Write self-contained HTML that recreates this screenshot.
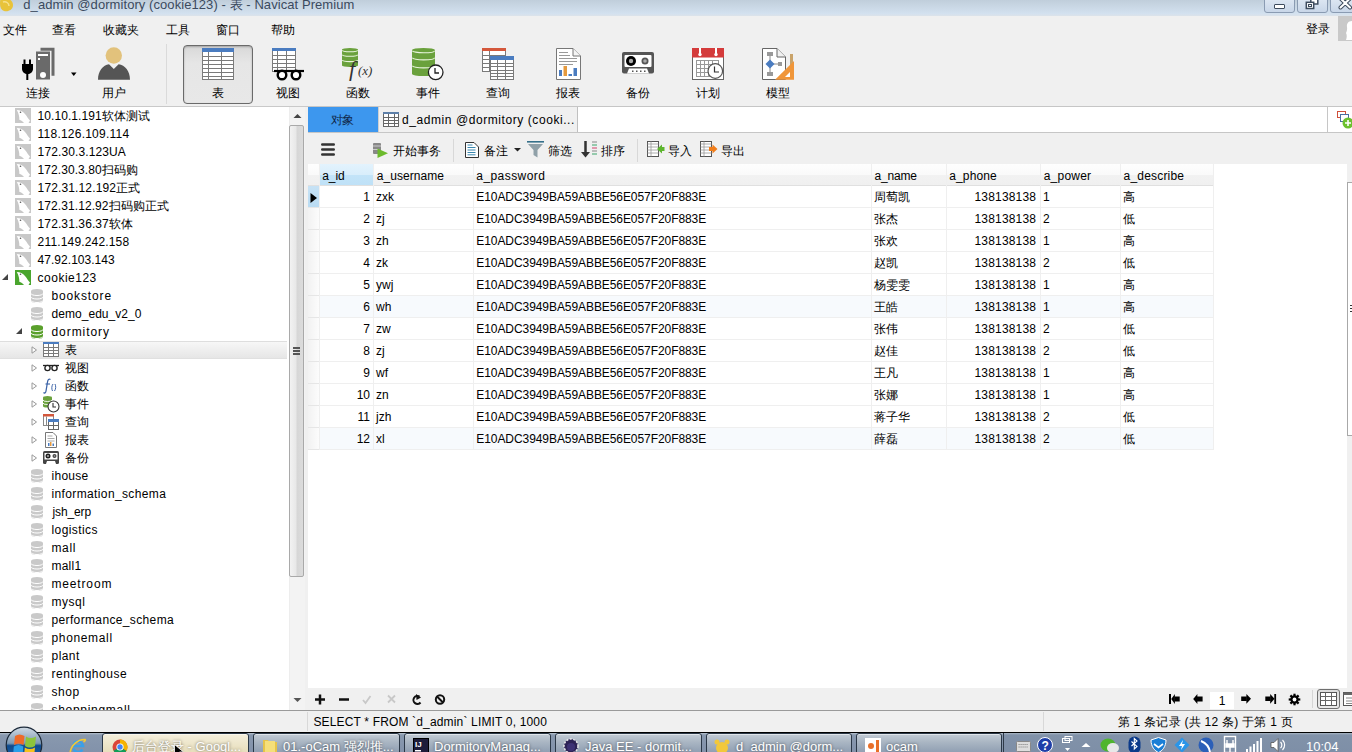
<!DOCTYPE html><html><head><meta charset="utf-8"><style>
*{box-sizing:border-box;margin:0;padding:0}
html,body{width:1352px;height:752px;overflow:hidden;background:#f0f0f0;font-family:"Liberation Sans",sans-serif;font-size:12px;color:#000}
.a{position:absolute}
.t{position:absolute;white-space:nowrap;line-height:14px}
svg{position:absolute;overflow:visible}
</style></head><body>
<div class="a" style="left:0;top:0;width:1352px;height:16px;background:linear-gradient(#c0cedb,#d3e1ef 85%,#dce3ea)"></div>
<svg style="left:0;top:0" width="16" height="16"><path d="M1,-3 C6,-4 13,0 13,5 C13,10 8,12 4,11 C0,10 -1,4 1,-3Z" fill="#e8c33a"/><path d="M3,2 C6,1 9,3 9,6" stroke="#f6e08a" stroke-width="1.5" fill="none"/></svg>
<div class="t" style="left:23.30px;top:-2px;font-size:13px;color:#3b4a5e;letter-spacing:0.070px;">d_admin @dormitory (cookie123) - 表 - Navicat Premium</div>
<div class="a" style="left:1264px;top:-3px;width:31px;height:16px;border:1px solid #8a9bb2;border-radius:3px;background:linear-gradient(#dfe8f3,#c8d6e8)"></div>
<div class="a" style="left:1274px;top:4px;width:11px;height:5px;border:1.5px solid #3e4c5e;border-radius:1px;background:#fff"></div>
<div class="a" style="left:1297px;top:-3px;width:31px;height:16px;border:1px solid #8a9bb2;border-radius:3px;background:linear-gradient(#dfe8f3,#c8d6e8)"></div>
<svg style="left:1305px;top:-2px" width="16" height="14"><rect x="5.8" y="-1" width="7" height="7" fill="#fff" stroke="#3e4c5e" stroke-width="1.5"/><rect x="1.3" y="4.3" width="7.4" height="6.2" fill="#fff" stroke="#3e4c5e" stroke-width="1.5"/><rect x="3.5" y="6.5" width="3" height="2" fill="none" stroke="#3e4c5e" stroke-width="1"/></svg>
<div class="a" style="left:1330px;top:-3px;width:30px;height:16px;border:1px solid #8a9bb2;border-radius:3px;background:linear-gradient(#dfe8f3,#c8d6e8)"></div>
<svg style="left:1339px;top:-2px" width="14" height="12"><path d="M1.5,0.5 L11,9.5 M11,0.5 L1.5,9.5" stroke="#3e4c5e" stroke-width="4" stroke-linecap="round"/><path d="M1.5,0.5 L11,9.5 M11,0.5 L1.5,9.5" stroke="#fff" stroke-width="2" stroke-linecap="round"/></svg>
<div class="t" style="left:3.00px;top:23px;font-size:12px;color:#000;">文件</div>
<div class="t" style="left:52.00px;top:23px;font-size:12px;color:#000;">查看</div>
<div class="t" style="left:103.00px;top:23px;font-size:12px;color:#000;">收藏夹</div>
<div class="t" style="left:166.00px;top:23px;font-size:12px;color:#000;">工具</div>
<div class="t" style="left:216.00px;top:23px;font-size:12px;color:#000;">窗口</div>
<div class="t" style="left:271.00px;top:23px;font-size:12px;color:#000;">帮助</div>
<div class="t" style="left:1306.00px;top:22px;font-size:12px;color:#000;">登录</div>
<div class="a" style="left:1338px;top:16px;width:14px;height:25px;background:#c9c9c9"></div>
<svg style="left:1338px;top:16px" width="14" height="25"><path d="M14,5 C10,5 8.5,8 9,11 C9.3,13 9,15 8,17 C9,19 9,21 8,24 L14,24Z" fill="#fff"/></svg>
<div class="a" style="left:166px;top:44px;width:1px;height:60px;background:#dadada"></div>
<div class="a" style="left:183px;top:45px;width:70px;height:59px;border:1px solid #6a6a6a;border-radius:4px;background:linear-gradient(#d8d8d8,#e6e6e6 30%,#e8e8e8);box-shadow:inset 0 1px 2px rgba(0,0,0,.25)"></div>
<div class="t" style="left:8px;top:86px;width:60px;text-align:center;font-size:12px">连接</div>
<div class="t" style="left:83.6px;top:86px;width:60px;text-align:center;font-size:12px">用户</div>
<div class="t" style="left:188px;top:86px;width:60px;text-align:center;font-size:12px">表</div>
<div class="t" style="left:257.6px;top:86px;width:60px;text-align:center;font-size:12px">视图</div>
<div class="t" style="left:327.8px;top:86px;width:60px;text-align:center;font-size:12px">函数</div>
<div class="t" style="left:397.7px;top:86px;width:60px;text-align:center;font-size:12px">事件</div>
<div class="t" style="left:468px;top:86px;width:60px;text-align:center;font-size:12px">查询</div>
<div class="t" style="left:538px;top:86px;width:60px;text-align:center;font-size:12px">报表</div>
<div class="t" style="left:608px;top:86px;width:60px;text-align:center;font-size:12px">备份</div>
<div class="t" style="left:678px;top:86px;width:60px;text-align:center;font-size:12px">计划</div>
<div class="t" style="left:748px;top:86px;width:60px;text-align:center;font-size:12px">模型</div>
<svg style="left:21px;top:47px" width="60" height="34">
<path d="M19.5,2.3 h12.5 v26.5" fill="none" stroke="#6a6a6a" stroke-width="3"/>
<rect x="15" y="4.5" width="14" height="28" fill="#6a6a6a"/>
<rect x="17" y="7" width="10" height="2" fill="#fff"/>
<rect x="17" y="11" width="2" height="2" fill="#fff"/>
<circle cx="22" cy="28" r="3" fill="#fff"/>
<rect x="2.5" y="12.5" width="2" height="5" fill="#000"/><rect x="8" y="12.5" width="2" height="5" fill="#000"/>
<path d="M1,17 h11 v5 c0,3 -3,5 -5,5 h-1 c-2,0 -5,-2 -5,-5z" fill="#000"/>
<rect x="5.3" y="26" width="2" height="7" fill="#000"/>
<path d="M50,25.5 h5.5 l-2.75,3.5z" fill="#000"/>
</svg>
<svg style="left:97px;top:47px" width="34" height="34">
<circle cx="16.8" cy="8.5" r="8.2" fill="#e2c27c"/>
<path d="M1,32.7 C1,24 6,18 12,17.3 L16.8,22 L21.6,17.3 C28,18 33,24 33,32.7Z" fill="#555"/>
</svg>
<svg style="left:202px;top:48px" width="32" height="32"><rect x="0.5" y="0.5" width="31" height="31" fill="#fff" stroke="#7a7a7a"/><rect x="0" y="0" width="32" height="4" fill="#4a7cc0"/><line x1="0" x2="32" y1="8.5" y2="8.5" stroke="#7a7a7a" stroke-width="1"/><line x1="0" x2="32" y1="12.5" y2="12.5" stroke="#7a7a7a" stroke-width="1"/><line x1="0" x2="32" y1="16.5" y2="16.5" stroke="#7a7a7a" stroke-width="1"/><line x1="0" x2="32" y1="20.5" y2="20.5" stroke="#7a7a7a" stroke-width="1"/><line x1="0" x2="32" y1="24.5" y2="24.5" stroke="#7a7a7a" stroke-width="1"/><line x1="0" x2="32" y1="28.5" y2="28.5" stroke="#7a7a7a" stroke-width="1"/><line x1="6.5" x2="6.5" y1="4" y2="32" stroke="#7a7a7a" stroke-width="1"/><line x1="19.5" x2="19.5" y1="4" y2="32" stroke="#7a7a7a" stroke-width="1"/></svg>
<svg style="left:272px;top:48px" width="24" height="24"><rect x="0.5" y="0.5" width="23" height="23" fill="#fff" stroke="#7a7a7a"/><rect x="0" y="0" width="24" height="3" fill="#4a7cc0"/><line x1="0" x2="24" y1="7.5" y2="7.5" stroke="#7a7a7a" stroke-width="1"/><line x1="0" x2="24" y1="11.5" y2="11.5" stroke="#7a7a7a" stroke-width="1"/><line x1="0" x2="24" y1="15.5" y2="15.5" stroke="#7a7a7a" stroke-width="1"/><line x1="0" x2="24" y1="19.5" y2="19.5" stroke="#7a7a7a" stroke-width="1"/><line x1="5.5" x2="5.5" y1="3" y2="24" stroke="#7a7a7a" stroke-width="1"/><line x1="14.5" x2="14.5" y1="3" y2="24" stroke="#7a7a7a" stroke-width="1"/></svg>
<svg style="left:274px;top:69px" width="32" height="12">
<path d="M0,2 h30" stroke="#000" stroke-width="2.2"/>
<circle cx="8" cy="6" r="4.3" fill="#fff" stroke="#000" stroke-width="2.4"/>
<circle cx="22" cy="6" r="4.3" fill="#fff" stroke="#000" stroke-width="2.4"/>
</svg>
<svg style="left:342px;top:48px" width="16" height="19"><path d="M0,1.6 A8.0,1.6 0 0 1 16,1.6 V17.4 A8.0,1.6 0 0 1 0,17.4Z" fill="#6aa13c"/><path d="M0.5,2.2 A7.5,1.6 0 0 0 15.5,2.2" fill="none" stroke="#e8f5dc" stroke-width="1.1"/><path d="M0.5,6.7 A7.5,1.6 0 0 0 15.5,6.7" fill="none" stroke="#e8f5dc" stroke-width="1.1"/><path d="M0.5,12.0 A7.5,1.6 0 0 0 15.5,12.0" fill="none" stroke="#e8f5dc" stroke-width="1.1"/></svg>
<div class="t" style="left:349px;top:58px;font-family:'Liberation Serif',serif;font-style:italic;font-size:22px;line-height:22px;color:#333">f</div>
<div class="t" style="left:358px;top:64px;font-family:'Liberation Serif',serif;font-style:italic;font-size:13px;line-height:14px;color:#333">(x)</div>
<svg style="left:412px;top:48px" width="23" height="28"><path d="M0,2.07 A11.5,2.07 0 0 1 23,2.07 V25.93 A11.5,2.07 0 0 1 0,25.93Z" fill="#6aa13c"/><path d="M0.5,2.7 A11.0,2.07 0 0 0 22.5,2.7" fill="none" stroke="#e8f5dc" stroke-width="1.1"/><path d="M0.5,9.8 A11.0,2.07 0 0 0 22.5,9.8" fill="none" stroke="#e8f5dc" stroke-width="1.1"/><path d="M0.5,17.8 A11.0,2.07 0 0 0 22.5,17.8" fill="none" stroke="#e8f5dc" stroke-width="1.1"/></svg>
<svg style="left:427px;top:64px" width="18" height="18"><circle cx="8.7" cy="8.3" r="7.3" fill="#fff" stroke="#222" stroke-width="1.3"/><path d="M8,4 V9 H12" fill="none" stroke="#222" stroke-width="1.3"/></svg>
<svg style="left:482px;top:48px" width="24" height="24"><rect x="0.5" y="0.5" width="23" height="23" fill="#fff" stroke="#7a7a7a"/><rect x="0" y="0" width="24" height="3" fill="#d4573b"/><line x1="0" x2="24" y1="7.5" y2="7.5" stroke="#7a7a7a" stroke-width="1"/><line x1="0" x2="24" y1="11.5" y2="11.5" stroke="#7a7a7a" stroke-width="1"/><line x1="0" x2="24" y1="15.5" y2="15.5" stroke="#7a7a7a" stroke-width="1"/><line x1="0" x2="24" y1="19.5" y2="19.5" stroke="#7a7a7a" stroke-width="1"/><line x1="7.5" x2="7.5" y1="3" y2="24" stroke="#7a7a7a" stroke-width="1"/></svg>
<svg style="left:490px;top:56px" width="24" height="24"><rect x="0.5" y="0.5" width="23" height="23" fill="#fff" stroke="#7a7a7a"/><rect x="0" y="0" width="24" height="4" fill="#4a7cc0"/><line x1="0" x2="24" y1="7.5" y2="7.5" stroke="#7a7a7a" stroke-width="1"/><line x1="0" x2="24" y1="10.5" y2="10.5" stroke="#7a7a7a" stroke-width="1"/><line x1="0" x2="24" y1="14.5" y2="14.5" stroke="#7a7a7a" stroke-width="1"/><line x1="0" x2="24" y1="17.5" y2="17.5" stroke="#7a7a7a" stroke-width="1"/><line x1="0" x2="24" y1="20.5" y2="20.5" stroke="#7a7a7a" stroke-width="1"/><line x1="7.5" x2="7.5" y1="4" y2="24" stroke="#7a7a7a" stroke-width="1"/><line x1="15.5" x2="15.5" y1="4" y2="24" stroke="#7a7a7a" stroke-width="1"/></svg>
<svg style="left:556px;top:48px" width="25" height="32">
<path d="M0.5,0.5 H17 L24.5,8 V31.5 H0.5Z" fill="#fff" stroke="#777"/>
<path d="M17,0.5 V8 H24.5" fill="#f4f4f4" stroke="#777"/>
<g stroke="#999" stroke-width="1"><path d="M3,4.5h9M3,7.5h11M3,10.5h18M3,13.5h18M3,16.5h14"/></g>
<rect x="3" y="22" width="3" height="6" fill="#4a7cc0"/><rect x="7.5" y="18" width="3.5" height="10" fill="#e59a3e"/>
<rect x="12.5" y="26" width="3.5" height="2" fill="#4a7cc0"/><rect x="17.5" y="20" width="3.5" height="8" fill="#4a7cc0"/>
</svg>
<svg style="left:622px;top:52px" width="33" height="23">
<rect x="0" y="0" width="32" height="21.5" rx="2" fill="#555"/>
<rect x="2.5" y="3" width="27" height="12" rx="1" fill="#fff"/>
<circle cx="9" cy="9" r="5" fill="#000"/><circle cx="9" cy="9" r="2.2" fill="#aaa"/>
<circle cx="23" cy="9" r="3.5" fill="#555"/><circle cx="23" cy="9" r="1.8" fill="#aaa"/>
<path d="M5,21.5 L7,16.5 H25 L27,21.5Z" fill="#fff"/>
<g fill="#555"><rect x="10" y="18.5" width="1.5" height="1.5"/><rect x="14" y="18.5" width="1.5" height="1.5"/><rect x="18" y="18.5" width="1.5" height="1.5"/><rect x="22" y="18.5" width="1.5" height="1.5"/></g>
</svg>
<svg style="left:692px;top:48px" width="33" height="33">
<rect x="0.5" y="0.5" width="31" height="31" fill="#fff" stroke="#666"/>
<rect x="0" y="0" width="32" height="9.5" fill="#d43b3b"/>
<rect x="7" y="0" width="2" height="6" fill="#fff"/><circle cx="8" cy="6.5" r="1.7" fill="#fff"/>
<rect x="23" y="0" width="2" height="6" fill="#fff"/><circle cx="24" cy="6.5" r="1.7" fill="#fff"/>
<g fill="none" stroke="#999" stroke-width="1"><rect x="4.5" y="12.5" width="22" height="16"/><path d="M4.5,16.5h22M4.5,20.5h22M4.5,24.5h22M8.5,12.5v16M12.5,12.5v16M16.5,12.5v16M20.5,12.5v16"/></g>
<circle cx="23.3" cy="23" r="7.3" fill="#fff" stroke="#555" stroke-width="1.2"/>
<path d="M22.5,18.5 V24 H27" fill="none" stroke="#333" stroke-width="1.2"/>
</svg>
<svg style="left:762px;top:48px" width="34" height="33">
<path d="M0.5,0.5 H15 L23.5,9 V31.5 H0.5Z" fill="#fff" stroke="#666"/>
<path d="M15,0.5 V9 H23.5" fill="#f0f0f0" stroke="#666"/>
<rect x="5" y="4" width="6" height="4" fill="#999"/><rect x="5" y="24" width="6" height="4" fill="#999"/><rect x="16" y="14" width="4" height="4" fill="#999"/>
<path d="M8,8 V24 M8,16 H16" stroke="#888" stroke-width="1"/>
<path d="M8,11.5 L12.5,16 L8,20.5 L3.5,16Z" fill="#4a7cc0"/>
<rect x="28" y="6" width="3" height="14" fill="#c9a36a"/>
<path d="M32,13 V31.8 H13Z" fill="#f0963a"/><path d="M28,24 V29 H23Z" fill="#fff"/>
</svg>
<div class="a" style="left:0;top:106px;width:1352px;height:1px;background:#c9c9c9"></div>
<div class="a" style="left:0;top:107px;width:289px;height:603px;background:#fff;overflow:hidden">
<svg style="left:15px;top:1.0px" width="16" height="16"><rect x="0" y="0" width="16" height="15" fill="#c8c8c8"/><path d="M1.8,2 C5,2 8,3.5 10,6 C12,8.5 13.5,11 15,12.5 L13.5,15 L9,15 C8,13.5 6,12.5 4.3,11.8 C4.5,9 3.8,5.5 1.8,2Z" fill="#fff"/><circle cx="5.5" cy="4.3" r="0.8" fill="#555"/></svg>
<div class="t" style="left:37.60px;top:1.5px;font-size:12px;color:#000;letter-spacing:0.058px;">10.10.1.191软体测试</div>
<svg style="left:15px;top:19.0px" width="16" height="16"><rect x="0" y="0" width="16" height="15" fill="#c8c8c8"/><path d="M1.8,2 C5,2 8,3.5 10,6 C12,8.5 13.5,11 15,12.5 L13.5,15 L9,15 C8,13.5 6,12.5 4.3,11.8 C4.5,9 3.8,5.5 1.8,2Z" fill="#fff"/><circle cx="5.5" cy="4.3" r="0.8" fill="#555"/></svg>
<div class="t" style="left:37.60px;top:19.5px;font-size:12px;color:#000;letter-spacing:0.226px;">118.126.109.114</div>
<svg style="left:15px;top:37.0px" width="16" height="16"><rect x="0" y="0" width="16" height="15" fill="#c8c8c8"/><path d="M1.8,2 C5,2 8,3.5 10,6 C12,8.5 13.5,11 15,12.5 L13.5,15 L9,15 C8,13.5 6,12.5 4.3,11.8 C4.5,9 3.8,5.5 1.8,2Z" fill="#fff"/><circle cx="5.5" cy="4.3" r="0.8" fill="#555"/></svg>
<div class="t" style="left:37.60px;top:37.5px;font-size:12px;color:#000;letter-spacing:0.113px;">172.30.3.123UA</div>
<svg style="left:15px;top:55.0px" width="16" height="16"><rect x="0" y="0" width="16" height="15" fill="#c8c8c8"/><path d="M1.8,2 C5,2 8,3.5 10,6 C12,8.5 13.5,11 15,12.5 L13.5,15 L9,15 C8,13.5 6,12.5 4.3,11.8 C4.5,9 3.8,5.5 1.8,2Z" fill="#fff"/><circle cx="5.5" cy="4.3" r="0.8" fill="#555"/></svg>
<div class="t" style="left:37.60px;top:55.5px;font-size:12px;color:#000;letter-spacing:0.062px;">172.30.3.80扫码购</div>
<svg style="left:15px;top:73.0px" width="16" height="16"><rect x="0" y="0" width="16" height="15" fill="#c8c8c8"/><path d="M1.8,2 C5,2 8,3.5 10,6 C12,8.5 13.5,11 15,12.5 L13.5,15 L9,15 C8,13.5 6,12.5 4.3,11.8 C4.5,9 3.8,5.5 1.8,2Z" fill="#fff"/><circle cx="5.5" cy="4.3" r="0.8" fill="#555"/></svg>
<div class="t" style="left:37.60px;top:73.5px;font-size:12px;color:#000;letter-spacing:0.133px;">172.31.12.192正式</div>
<svg style="left:15px;top:91.0px" width="16" height="16"><rect x="0" y="0" width="16" height="15" fill="#c8c8c8"/><path d="M1.8,2 C5,2 8,3.5 10,6 C12,8.5 13.5,11 15,12.5 L13.5,15 L9,15 C8,13.5 6,12.5 4.3,11.8 C4.5,9 3.8,5.5 1.8,2Z" fill="#fff"/><circle cx="5.5" cy="4.3" r="0.8" fill="#555"/></svg>
<div class="t" style="left:37.60px;top:91.5px;font-size:12px;color:#000;letter-spacing:0.077px;">172.31.12.92扫码购正式</div>
<svg style="left:15px;top:109.0px" width="16" height="16"><rect x="0" y="0" width="16" height="15" fill="#c8c8c8"/><path d="M1.8,2 C5,2 8,3.5 10,6 C12,8.5 13.5,11 15,12.5 L13.5,15 L9,15 C8,13.5 6,12.5 4.3,11.8 C4.5,9 3.8,5.5 1.8,2Z" fill="#fff"/><circle cx="5.5" cy="4.3" r="0.8" fill="#555"/></svg>
<div class="t" style="left:37.60px;top:109.5px;font-size:12px;color:#000;letter-spacing:0.103px;">172.31.36.37软体</div>
<svg style="left:15px;top:127.0px" width="16" height="16"><rect x="0" y="0" width="16" height="15" fill="#c8c8c8"/><path d="M1.8,2 C5,2 8,3.5 10,6 C12,8.5 13.5,11 15,12.5 L13.5,15 L9,15 C8,13.5 6,12.5 4.3,11.8 C4.5,9 3.8,5.5 1.8,2Z" fill="#fff"/><circle cx="5.5" cy="4.3" r="0.8" fill="#555"/></svg>
<div class="t" style="left:37.60px;top:127.5px;font-size:12px;color:#000;letter-spacing:0.163px;">211.149.242.158</div>
<svg style="left:15px;top:145.0px" width="16" height="16"><rect x="0" y="0" width="16" height="15" fill="#c8c8c8"/><path d="M1.8,2 C5,2 8,3.5 10,6 C12,8.5 13.5,11 15,12.5 L13.5,15 L9,15 C8,13.5 6,12.5 4.3,11.8 C4.5,9 3.8,5.5 1.8,2Z" fill="#fff"/><circle cx="5.5" cy="4.3" r="0.8" fill="#555"/></svg>
<div class="t" style="left:37.60px;top:145.5px;font-size:12px;color:#000;letter-spacing:0.028px;">47.92.103.143</div>
<svg style="left:2px;top:167.0px" width="7" height="6"><path d="M6,0 V6 H0Z" fill="#444"/></svg>
<svg style="left:15px;top:163.0px" width="16" height="16"><rect x="0" y="0" width="16" height="15" fill="#4aa52e"/><path d="M1.8,2 C5,2 8,3.5 10,6 C12,8.5 13.5,11 15,12.5 L13.5,15 L9,15 C8,13.5 6,12.5 4.3,11.8 C4.5,9 3.8,5.5 1.8,2Z" fill="#fff"/><circle cx="5.5" cy="4.3" r="0.8" fill="#555"/></svg>
<div class="t" style="left:37.60px;top:163.5px;font-size:12px;color:#000;letter-spacing:0.496px;">cookie123</div>
<svg style="left:31px;top:181.5px" width="12" height="14"><path d="M0,2 A6,2 0 0 1 12,2 V12 A6,2 0 0 1 0,12Z" fill="#c9c9c9"/><path d="M0,4.5 A6,2 0 0 0 12,4.5" fill="none" stroke="#fff" stroke-width="1"/><path d="M0,8 A6,2 0 0 0 12,8" fill="none" stroke="#fff" stroke-width="1"/><path d="M0,11.5 A6,2 0 0 0 12,11.5" fill="none" stroke="#fff" stroke-width="1"/></svg>
<div class="t" style="left:51.50px;top:181.5px;font-size:12px;color:#000;letter-spacing:0.859px;">bookstore</div>
<svg style="left:31px;top:199.5px" width="12" height="14"><path d="M0,2 A6,2 0 0 1 12,2 V12 A6,2 0 0 1 0,12Z" fill="#c9c9c9"/><path d="M0,4.5 A6,2 0 0 0 12,4.5" fill="none" stroke="#fff" stroke-width="1"/><path d="M0,8 A6,2 0 0 0 12,8" fill="none" stroke="#fff" stroke-width="1"/><path d="M0,11.5 A6,2 0 0 0 12,11.5" fill="none" stroke="#fff" stroke-width="1"/></svg>
<div class="t" style="left:51.50px;top:199.5px;font-size:12px;color:#000;letter-spacing:0.047px;">demo_edu_v2_0</div>
<svg style="left:16px;top:221.0px" width="7" height="6"><path d="M6,0 V6 H0Z" fill="#444"/></svg>
<svg style="left:31px;top:217.5px" width="12" height="14"><path d="M0,2 A6,2 0 0 1 12,2 V12 A6,2 0 0 1 0,12Z" fill="#5aa02c"/><path d="M0,4.5 A6,2 0 0 0 12,4.5" fill="none" stroke="#fff" stroke-width="1"/><path d="M0,8 A6,2 0 0 0 12,8" fill="none" stroke="#fff" stroke-width="1"/><path d="M0,11.5 A6,2 0 0 0 12,11.5" fill="none" stroke="#fff" stroke-width="1"/></svg>
<div class="t" style="left:51.50px;top:217.5px;font-size:12px;color:#000;letter-spacing:0.936px;">dormitory</div>
<div class="a" style="left:0;top:234.0px;width:287px;height:18px;background:linear-gradient(#f7f7f7,#e6e6e6);border-top:1px solid #dedede;border-bottom:1px solid #e0e0e0"></div>
<svg style="left:31px;top:238.5px" width="7" height="9"><path d="M1,0.8 L5.5,4 L1,7.2Z" fill="#fff" stroke="#999" stroke-width="1"/></svg>
<div class="t" style="left:65.00px;top:235.5px;font-size:12px;color:#000;">表</div>
<svg style="left:31px;top:256.5px" width="7" height="9"><path d="M1,0.8 L5.5,4 L1,7.2Z" fill="#fff" stroke="#999" stroke-width="1"/></svg>
<div class="t" style="left:65.00px;top:253.5px;font-size:12px;color:#000;">视图</div>
<svg style="left:31px;top:274.5px" width="7" height="9"><path d="M1,0.8 L5.5,4 L1,7.2Z" fill="#fff" stroke="#999" stroke-width="1"/></svg>
<div class="t" style="left:65.00px;top:271.5px;font-size:12px;color:#000;">函数</div>
<svg style="left:31px;top:292.5px" width="7" height="9"><path d="M1,0.8 L5.5,4 L1,7.2Z" fill="#fff" stroke="#999" stroke-width="1"/></svg>
<div class="t" style="left:65.00px;top:289.5px;font-size:12px;color:#000;">事件</div>
<svg style="left:31px;top:310.5px" width="7" height="9"><path d="M1,0.8 L5.5,4 L1,7.2Z" fill="#fff" stroke="#999" stroke-width="1"/></svg>
<div class="t" style="left:65.00px;top:307.5px;font-size:12px;color:#000;">查询</div>
<svg style="left:31px;top:328.5px" width="7" height="9"><path d="M1,0.8 L5.5,4 L1,7.2Z" fill="#fff" stroke="#999" stroke-width="1"/></svg>
<div class="t" style="left:65.00px;top:325.5px;font-size:12px;color:#000;">报表</div>
<svg style="left:31px;top:346.5px" width="7" height="9"><path d="M1,0.8 L5.5,4 L1,7.2Z" fill="#fff" stroke="#999" stroke-width="1"/></svg>
<div class="t" style="left:65.00px;top:343.5px;font-size:12px;color:#000;">备份</div>
<svg style="left:43px;top:235px" width="16" height="15"><rect x="0.5" y="0.5" width="15" height="14" fill="#fff" stroke="#7a7a7a"/><rect x="0" y="0" width="16" height="2" fill="#4a7cc0"/><line x1="0" x2="16" y1="5.5" y2="5.5" stroke="#7a7a7a" stroke-width="1"/><line x1="0" x2="16" y1="8.5" y2="8.5" stroke="#7a7a7a" stroke-width="1"/><line x1="0" x2="16" y1="11.5" y2="11.5" stroke="#7a7a7a" stroke-width="1"/><line x1="5.5" x2="5.5" y1="2" y2="15" stroke="#7a7a7a" stroke-width="1"/><line x1="10.5" x2="10.5" y1="2" y2="15" stroke="#7a7a7a" stroke-width="1"/></svg>
<svg style="left:43px;top:256.5px" width="16" height="8"><path d="M0,1.5 h16" stroke="#222" stroke-width="1.3"/><circle cx="4.5" cy="4" r="2.6" fill="#fff" stroke="#222" stroke-width="1.4"/><circle cx="11.5" cy="4" r="2.6" fill="#fff" stroke="#222" stroke-width="1.4"/></svg>
<svg style="left:43px;top:270.5px" width="16" height="16"><path d="M7.5,1.5 C6,0.5 4.8,1.5 4.5,4 L3,13 C2.7,15 1.5,15.5 0.5,14.5" fill="none" stroke="#3d64a8" stroke-width="1.3"/><path d="M2.5,6 H7" stroke="#3d64a8" stroke-width="1.1"/><path d="M10,6 C8.5,8 8.5,11 9.5,13" fill="none" stroke="#3d64a8" stroke-width="1"/><path d="M12,6 C13,8 13,11 11.5,13" fill="none" stroke="#3d64a8" stroke-width="1"/></svg>
<svg style="left:43px;top:288.5px" width="17" height="17"><path d="M0,1.5 A4.5,1.5 0 0 1 9,1.5 V10 A4.5,1.5 0 0 1 0,10Z" fill="#6aa13c"/><path d="M0,4 A4.5,1.5 0 0 0 9,4 M0,7 A4.5,1.5 0 0 0 9,7" fill="none" stroke="#fff" stroke-width="0.9"/><circle cx="10.5" cy="10.5" r="5.5" fill="#fff" stroke="#333" stroke-width="1.1"/><path d="M10,7 V11 H13" fill="none" stroke="#333" stroke-width="1.1"/></svg>
<svg style="left:43px;top:306.5px" width="17" height="17"><rect x="0.5" y="0.5" width="10" height="11" fill="#fff" stroke="#888"/><rect x="0" y="0" width="11" height="2.5" fill="#d4573b"/><path d="M3.5,2.5V11" stroke="#888"/><rect x="5.5" y="5.5" width="10" height="10" fill="#fff" stroke="#666"/><rect x="5" y="5" width="11" height="3" fill="#4a7cc0"/><path d="M5.5,11.5h10M10.5,8v7.5" stroke="#666"/></svg>
<svg style="left:45px;top:324.5px" width="12" height="16"><path d="M0.5,0.5 H8 L11.5,4 V15.5 H0.5Z" fill="#fff" stroke="#777"/><path d="M2.5,4h5M2.5,6.5h7M2.5,9h7" stroke="#aaa"/><rect x="3" y="11" width="1.5" height="3" fill="#4a7cc0"/><rect x="5" y="10" width="1.5" height="4" fill="#e59a3e"/><rect x="7.5" y="11.5" width="1.5" height="2.5" fill="#4a7cc0"/></svg>
<svg style="left:43px;top:343.5px" width="17" height="14"><rect x="0" y="0" width="16" height="13" rx="1.5" fill="#444"/><rect x="1.5" y="2" width="13" height="6.5" fill="#fff"/><circle cx="5" cy="5" r="2.5" fill="#222"/><circle cx="5" cy="5" r="1" fill="#aaa"/><circle cx="11.5" cy="5" r="2" fill="#444"/><circle cx="11.5" cy="5" r="0.8" fill="#aaa"/><path d="M3,13 L4,10 H12 L13,13Z" fill="#fff"/></svg>
<svg style="left:31px;top:361.5px" width="12" height="14"><path d="M0,2 A6,2 0 0 1 12,2 V12 A6,2 0 0 1 0,12Z" fill="#c9c9c9"/><path d="M0,4.5 A6,2 0 0 0 12,4.5" fill="none" stroke="#fff" stroke-width="1"/><path d="M0,8 A6,2 0 0 0 12,8" fill="none" stroke="#fff" stroke-width="1"/><path d="M0,11.5 A6,2 0 0 0 12,11.5" fill="none" stroke="#fff" stroke-width="1"/></svg>
<div class="t" style="left:51.50px;top:361.5px;font-size:12px;color:#000;letter-spacing:0.282px;">ihouse</div>
<svg style="left:31px;top:379.5px" width="12" height="14"><path d="M0,2 A6,2 0 0 1 12,2 V12 A6,2 0 0 1 0,12Z" fill="#c9c9c9"/><path d="M0,4.5 A6,2 0 0 0 12,4.5" fill="none" stroke="#fff" stroke-width="1"/><path d="M0,8 A6,2 0 0 0 12,8" fill="none" stroke="#fff" stroke-width="1"/><path d="M0,11.5 A6,2 0 0 0 12,11.5" fill="none" stroke="#fff" stroke-width="1"/></svg>
<div class="t" style="left:51.50px;top:379.5px;font-size:12px;color:#000;letter-spacing:0.372px;">information_schema</div>
<svg style="left:31px;top:397.5px" width="12" height="14"><path d="M0,2 A6,2 0 0 1 12,2 V12 A6,2 0 0 1 0,12Z" fill="#c9c9c9"/><path d="M0,4.5 A6,2 0 0 0 12,4.5" fill="none" stroke="#fff" stroke-width="1"/><path d="M0,8 A6,2 0 0 0 12,8" fill="none" stroke="#fff" stroke-width="1"/><path d="M0,11.5 A6,2 0 0 0 12,11.5" fill="none" stroke="#fff" stroke-width="1"/></svg>
<div class="t" style="left:52.50px;top:397.5px;font-size:12px;color:#000;letter-spacing:-0.114px;">jsh_erp</div>
<svg style="left:31px;top:415.5px" width="12" height="14"><path d="M0,2 A6,2 0 0 1 12,2 V12 A6,2 0 0 1 0,12Z" fill="#c9c9c9"/><path d="M0,4.5 A6,2 0 0 0 12,4.5" fill="none" stroke="#fff" stroke-width="1"/><path d="M0,8 A6,2 0 0 0 12,8" fill="none" stroke="#fff" stroke-width="1"/><path d="M0,11.5 A6,2 0 0 0 12,11.5" fill="none" stroke="#fff" stroke-width="1"/></svg>
<div class="t" style="left:51.50px;top:415.5px;font-size:12px;color:#000;letter-spacing:0.415px;">logistics</div>
<svg style="left:31px;top:433.5px" width="12" height="14"><path d="M0,2 A6,2 0 0 1 12,2 V12 A6,2 0 0 1 0,12Z" fill="#c9c9c9"/><path d="M0,4.5 A6,2 0 0 0 12,4.5" fill="none" stroke="#fff" stroke-width="1"/><path d="M0,8 A6,2 0 0 0 12,8" fill="none" stroke="#fff" stroke-width="1"/><path d="M0,11.5 A6,2 0 0 0 12,11.5" fill="none" stroke="#fff" stroke-width="1"/></svg>
<div class="t" style="left:51.50px;top:433.5px;font-size:12px;color:#000;letter-spacing:0.621px;">mall</div>
<svg style="left:31px;top:451.5px" width="12" height="14"><path d="M0,2 A6,2 0 0 1 12,2 V12 A6,2 0 0 1 0,12Z" fill="#c9c9c9"/><path d="M0,4.5 A6,2 0 0 0 12,4.5" fill="none" stroke="#fff" stroke-width="1"/><path d="M0,8 A6,2 0 0 0 12,8" fill="none" stroke="#fff" stroke-width="1"/><path d="M0,11.5 A6,2 0 0 0 12,11.5" fill="none" stroke="#fff" stroke-width="1"/></svg>
<div class="t" style="left:51.50px;top:451.5px;font-size:12px;color:#000;letter-spacing:0.225px;">mall1</div>
<svg style="left:31px;top:469.5px" width="12" height="14"><path d="M0,2 A6,2 0 0 1 12,2 V12 A6,2 0 0 1 0,12Z" fill="#c9c9c9"/><path d="M0,4.5 A6,2 0 0 0 12,4.5" fill="none" stroke="#fff" stroke-width="1"/><path d="M0,8 A6,2 0 0 0 12,8" fill="none" stroke="#fff" stroke-width="1"/><path d="M0,11.5 A6,2 0 0 0 12,11.5" fill="none" stroke="#fff" stroke-width="1"/></svg>
<div class="t" style="left:51.50px;top:469.5px;font-size:12px;color:#000;letter-spacing:0.840px;">meetroom</div>
<svg style="left:31px;top:487.5px" width="12" height="14"><path d="M0,2 A6,2 0 0 1 12,2 V12 A6,2 0 0 1 0,12Z" fill="#c9c9c9"/><path d="M0,4.5 A6,2 0 0 0 12,4.5" fill="none" stroke="#fff" stroke-width="1"/><path d="M0,8 A6,2 0 0 0 12,8" fill="none" stroke="#fff" stroke-width="1"/><path d="M0,11.5 A6,2 0 0 0 12,11.5" fill="none" stroke="#fff" stroke-width="1"/></svg>
<div class="t" style="left:51.50px;top:487.5px;font-size:12px;color:#000;letter-spacing:0.533px;">mysql</div>
<svg style="left:31px;top:505.5px" width="12" height="14"><path d="M0,2 A6,2 0 0 1 12,2 V12 A6,2 0 0 1 0,12Z" fill="#c9c9c9"/><path d="M0,4.5 A6,2 0 0 0 12,4.5" fill="none" stroke="#fff" stroke-width="1"/><path d="M0,8 A6,2 0 0 0 12,8" fill="none" stroke="#fff" stroke-width="1"/><path d="M0,11.5 A6,2 0 0 0 12,11.5" fill="none" stroke="#fff" stroke-width="1"/></svg>
<div class="t" style="left:51.50px;top:505.5px;font-size:12px;color:#000;letter-spacing:0.360px;">performance_schema</div>
<svg style="left:31px;top:523.5px" width="12" height="14"><path d="M0,2 A6,2 0 0 1 12,2 V12 A6,2 0 0 1 0,12Z" fill="#c9c9c9"/><path d="M0,4.5 A6,2 0 0 0 12,4.5" fill="none" stroke="#fff" stroke-width="1"/><path d="M0,8 A6,2 0 0 0 12,8" fill="none" stroke="#fff" stroke-width="1"/><path d="M0,11.5 A6,2 0 0 0 12,11.5" fill="none" stroke="#fff" stroke-width="1"/></svg>
<div class="t" style="left:51.50px;top:523.5px;font-size:12px;color:#000;letter-spacing:0.649px;">phonemall</div>
<svg style="left:31px;top:541.5px" width="12" height="14"><path d="M0,2 A6,2 0 0 1 12,2 V12 A6,2 0 0 1 0,12Z" fill="#c9c9c9"/><path d="M0,4.5 A6,2 0 0 0 12,4.5" fill="none" stroke="#fff" stroke-width="1"/><path d="M0,8 A6,2 0 0 0 12,8" fill="none" stroke="#fff" stroke-width="1"/><path d="M0,11.5 A6,2 0 0 0 12,11.5" fill="none" stroke="#fff" stroke-width="1"/></svg>
<div class="t" style="left:51.50px;top:541.5px;font-size:12px;color:#000;letter-spacing:0.453px;">plant</div>
<svg style="left:31px;top:559.5px" width="12" height="14"><path d="M0,2 A6,2 0 0 1 12,2 V12 A6,2 0 0 1 0,12Z" fill="#c9c9c9"/><path d="M0,4.5 A6,2 0 0 0 12,4.5" fill="none" stroke="#fff" stroke-width="1"/><path d="M0,8 A6,2 0 0 0 12,8" fill="none" stroke="#fff" stroke-width="1"/><path d="M0,11.5 A6,2 0 0 0 12,11.5" fill="none" stroke="#fff" stroke-width="1"/></svg>
<div class="t" style="left:51.50px;top:559.5px;font-size:12px;color:#000;letter-spacing:0.526px;">rentinghouse</div>
<svg style="left:31px;top:577.5px" width="12" height="14"><path d="M0,2 A6,2 0 0 1 12,2 V12 A6,2 0 0 1 0,12Z" fill="#c9c9c9"/><path d="M0,4.5 A6,2 0 0 0 12,4.5" fill="none" stroke="#fff" stroke-width="1"/><path d="M0,8 A6,2 0 0 0 12,8" fill="none" stroke="#fff" stroke-width="1"/><path d="M0,11.5 A6,2 0 0 0 12,11.5" fill="none" stroke="#fff" stroke-width="1"/></svg>
<div class="t" style="left:51.50px;top:577.5px;font-size:12px;color:#000;letter-spacing:0.517px;">shop</div>
<svg style="left:31px;top:595.5px" width="12" height="14"><path d="M0,2 A6,2 0 0 1 12,2 V12 A6,2 0 0 1 0,12Z" fill="#c9c9c9"/><path d="M0,4.5 A6,2 0 0 0 12,4.5" fill="none" stroke="#fff" stroke-width="1"/><path d="M0,8 A6,2 0 0 0 12,8" fill="none" stroke="#fff" stroke-width="1"/><path d="M0,11.5 A6,2 0 0 0 12,11.5" fill="none" stroke="#fff" stroke-width="1"/></svg>
<div class="t" style="left:51.50px;top:595.5px;font-size:12px;color:#000;letter-spacing:0.705px;">shoppingmall</div>
</div>
<div class="a" style="left:289px;top:107px;width:16px;height:603px;background:#f3f3f3;border-left:1px solid #ededed"></div>
<svg style="left:293px;top:113px" width="9" height="6"><path d="M0.5,5 L4.5,1 L8.5,5Z" fill="#444"/></svg>
<svg style="left:293px;top:697px" width="9" height="6"><path d="M0.5,1 L4.5,5 L8.5,1Z" fill="#555"/></svg>
<div class="a" style="left:289px;top:125px;width:15px;height:452px;border:1px solid #a9a9a9;border-radius:2px;background:linear-gradient(90deg,#f2f2f2,#e8e8e8 45%,#d6d6d6 55%,#dcdcdc)"></div>
<div class="a" style="left:293px;top:347px;width:7px;height:2px;background:#555"></div><div class="a" style="left:293px;top:350px;width:7px;height:2px;background:#555"></div><div class="a" style="left:293px;top:353px;width:7px;height:2px;background:#555"></div>
<div class="a" style="left:305px;top:107px;width:3px;height:604px;background:#f0f0f0"></div>
<div class="a" style="left:308px;top:106px;width:1044px;height:27px;background:#fff;border-top:1px solid #c6c6c6;border-bottom:1px solid #c6c6c6"></div>
<div class="a" style="left:308px;top:107px;width:70px;height:25px;background:#3d97ee"></div>
<div class="t" style="left:331.00px;top:113px;font-size:12px;color:#10284a;letter-spacing:-0.600px;">对象</div>
<div class="a" style="left:378px;top:107px;width:200px;height:25px;background:#f0f0f0;border-left:1px solid #d0d0d0;border-right:1px solid #c0c0c0"></div>
<svg style="left:383px;top:112px" width="16" height="15"><rect x="0.5" y="0.5" width="15" height="14" fill="#fff" stroke="#666"/><rect x="0" y="0" width="16" height="2" fill="#5d7fa8"/><line x1="0" x2="16" y1="5.5" y2="5.5" stroke="#666" stroke-width="1"/><line x1="0" x2="16" y1="8.5" y2="8.5" stroke="#666" stroke-width="1"/><line x1="0" x2="16" y1="11.5" y2="11.5" stroke="#666" stroke-width="1"/><line x1="5.5" x2="5.5" y1="2" y2="15" stroke="#666" stroke-width="1"/><line x1="11.5" x2="11.5" y1="2" y2="15" stroke="#666" stroke-width="1"/></svg>
<div class="t" style="left:402.00px;top:113px;font-size:12px;color:#000;letter-spacing:0.572px;">d_admin @dormitory (cooki...</div>
<div class="a" style="left:1327px;top:107px;width:1px;height:25px;background:#c6c6c6"></div>
<svg style="left:1337px;top:111px" width="16" height="18"><rect x="0.5" y="0.5" width="8" height="6" fill="#fff" stroke="#d0503a"/><rect x="3.5" y="3.5" width="8" height="7" fill="#fff" stroke="#4a6fa0"/><circle cx="11" cy="12" r="5.5" fill="#6cc12e"/><path d="M11,9v6M8,12h6" stroke="#fff" stroke-width="1.6"/></svg>
<svg style="left:321px;top:143px" width="14" height="13"><g stroke="#333" stroke-width="2.4" stroke-linecap="round"><path d="M1.2,1.5h11.6M1.2,6.5h11.6M1.2,11.5h11.6"/></g></svg>
<svg style="left:373px;top:143px" width="17" height="17"><rect x="0" y="0" width="8" height="11" rx="1" fill="#888"/><path d="M0,3h8M0,6.5h6" stroke="#ddd" stroke-width="0.8"/><path d="M4.5,5.5 L15,10.3 L4.5,15Z" fill="#6cba2c"/></svg>
<div class="t" style="left:393.00px;top:144px;font-size:12px;color:#000;">开始事务</div>
<div class="a" style="left:453px;top:139px;width:1px;height:23px;background:#d8d8d8"></div>
<svg style="left:465px;top:142px" width="14" height="17"><path d="M0.5,0.5 H9 L13.5,5 V15.5 H0.5Z" fill="#fff" stroke="#333"/><path d="M2.5,3h5M2.5,5.5h8M2.5,8h8M2.5,10.5h8M2.5,12.8h8" stroke="#3a88b0" stroke-width="1"/></svg>
<div class="t" style="left:484.10px;top:144px;font-size:12px;color:#000;letter-spacing:-0.400px;">备注</div>
<svg style="left:514px;top:148px" width="7" height="4"><path d="M0,0 h7 l-3.5,3.5z" fill="#222"/></svg>
<svg style="left:527px;top:141px" width="18" height="17"><path d="M0,0.8h17" stroke="#35708a" stroke-width="1.6"/><path d="M1,3 H16 L10.5,9 V16.5 L6.5,14 V9Z" fill="#8fa0a8"/></svg>
<div class="t" style="left:547.80px;top:144px;font-size:12px;color:#000;">筛选</div>
<svg style="left:581px;top:141px" width="18" height="17"><path d="M4.5,0 V13" stroke="#333" stroke-width="2.5"/><path d="M0,11 L4.5,16.5 L9,11Z" fill="#333"/><g stroke-width="1"><path d="M11,1h5" stroke="#888"/><path d="M11,4h5" stroke="#3aa46a"/><path d="M11,7h5" stroke="#d0406a"/><path d="M11,10h5" stroke="#888"/><path d="M11,13h5" stroke="#3aa46a"/></g></svg>
<div class="t" style="left:601.10px;top:144px;font-size:12px;color:#000;letter-spacing:-0.100px;">排序</div>
<div class="a" style="left:637px;top:139px;width:1px;height:23px;background:#d8d8d8"></div>
<svg style="left:647px;top:141px" width="18" height="17"><rect x="0.5" y="0.5" width="11" height="15" fill="#fff" stroke="#555"/><path d="M0.5,3h11M0.5,6h11M0.5,9h11M0.5,12h11M4,0.5v15" stroke="#999" stroke-width="0.8"/><path d="M10,8 L15,3.5 V6 H17.5 V10 H15 V12.5Z" fill="#5db52e"/></svg>
<div class="t" style="left:667.70px;top:144px;font-size:12px;color:#000;letter-spacing:-0.100px;">导入</div>
<svg style="left:700px;top:141px" width="18" height="17"><rect x="0.5" y="0.5" width="11" height="15" fill="#fff" stroke="#555"/><path d="M0.5,3h11M0.5,6h11M0.5,9h11M0.5,12h11M4,0.5v15" stroke="#999" stroke-width="0.8"/><path d="M9,6 H12.5 V3.5 L17.5,8 L12.5,12.5 V10 H9Z" fill="#f07d1a"/></svg>
<div class="t" style="left:721.00px;top:144px;font-size:12px;color:#000;">导出</div>
<div class="a" style="left:308px;top:164px;width:1039px;height:524px;background:#fff"></div>
<div class="a" style="left:308px;top:164px;width:905px;height:22px;background:linear-gradient(#fefefe,#fafafa 50%,#f2f2f2 52%,#f0f0f0);border-bottom:1px solid #e0e0e0"></div>
<div class="a" style="left:319px;top:164px;width:54px;height:21px;background:linear-gradient(#e3f3fd,#d9eefb 50%,#c3e4f8 52%,#bfe1f7)"></div>
<div class="a" style="left:319px;top:164px;width:1px;height:285px;background:#efefef"></div>
<div class="a" style="left:373px;top:164px;width:1px;height:285px;background:#efefef"></div>
<div class="a" style="left:473px;top:164px;width:1px;height:285px;background:#efefef"></div>
<div class="a" style="left:871px;top:164px;width:1px;height:285px;background:#efefef"></div>
<div class="a" style="left:946px;top:164px;width:1px;height:285px;background:#efefef"></div>
<div class="a" style="left:1040px;top:164px;width:1px;height:285px;background:#efefef"></div>
<div class="a" style="left:1120px;top:164px;width:1px;height:285px;background:#efefef"></div>
<div class="a" style="left:1213px;top:164px;width:1px;height:285px;background:#efefef"></div>
<div class="t" style="left:322.20px;top:169px;font-size:12px;color:#000;letter-spacing:-0.071px;">a_id</div>
<div class="t" style="left:376.70px;top:169px;font-size:12px;color:#000;letter-spacing:0.063px;">a_username</div>
<div class="t" style="left:476.30px;top:169px;font-size:12px;color:#000;letter-spacing:0.430px;">a_password</div>
<div class="t" style="left:874.60px;top:169px;font-size:12px;color:#000;letter-spacing:-0.218px;">a_name</div>
<div class="t" style="left:949.20px;top:169px;font-size:12px;color:#000;letter-spacing:0.143px;">a_phone</div>
<div class="t" style="left:1043.70px;top:169px;font-size:12px;color:#000;letter-spacing:0.227px;">a_power</div>
<div class="t" style="left:1123.60px;top:169px;font-size:12px;color:#000;letter-spacing:0.185px;">a_describe</div>
<div class="a" style="left:319px;top:186px;width:894px;height:22px;background:#fff;border-bottom:1px solid #efefef"></div>
<div class="a" style="left:308px;top:186px;width:11px;height:22px;background:linear-gradient(#c7e2f5,#b9dbf2);border-bottom:1px solid #e6e6e6"></div>
<div class="a" style="left:319px;top:186px;width:1px;height:22px;background:#efefef"></div>
<div class="a" style="left:373px;top:186px;width:1px;height:22px;background:#efefef"></div>
<div class="a" style="left:473px;top:186px;width:1px;height:22px;background:#efefef"></div>
<div class="a" style="left:871px;top:186px;width:1px;height:22px;background:#efefef"></div>
<div class="a" style="left:946px;top:186px;width:1px;height:22px;background:#efefef"></div>
<div class="a" style="left:1040px;top:186px;width:1px;height:22px;background:#efefef"></div>
<div class="a" style="left:1120px;top:186px;width:1px;height:22px;background:#efefef"></div>
<div class="a" style="left:1213px;top:186px;width:1px;height:22px;background:#efefef"></div>
<div class="t" style="left:319px;top:190px;width:51px;text-align:right">1</div>
<div class="t" style="left:376.00px;top:190px;font-size:12px;color:#000;">zxk</div>
<div class="t" style="left:476.30px;top:190px;font-size:12px;color:#000;letter-spacing:-0.073px;">E10ADC3949BA59ABBE56E057F20F883E</div>
<div class="t" style="left:874.00px;top:190px;font-size:12px;color:#000;">周萄凯</div>
<div class="t" style="left:974.50px;top:190px;font-size:12px;color:#000;letter-spacing:0.176px;">138138138</div>
<div class="t" style="left:1043.00px;top:190px;font-size:12px;color:#000;">1</div>
<div class="t" style="left:1123.00px;top:190px;font-size:12px;color:#000;">高</div>
<div class="a" style="left:319px;top:208px;width:894px;height:22px;background:#fff;border-bottom:1px solid #efefef"></div>
<div class="a" style="left:308px;top:208px;width:11px;height:22px;background:linear-gradient(90deg,#f2f2f2,#fcfcfc);border-bottom:1px solid #e6e6e6"></div>
<div class="a" style="left:319px;top:208px;width:1px;height:22px;background:#efefef"></div>
<div class="a" style="left:373px;top:208px;width:1px;height:22px;background:#efefef"></div>
<div class="a" style="left:473px;top:208px;width:1px;height:22px;background:#efefef"></div>
<div class="a" style="left:871px;top:208px;width:1px;height:22px;background:#efefef"></div>
<div class="a" style="left:946px;top:208px;width:1px;height:22px;background:#efefef"></div>
<div class="a" style="left:1040px;top:208px;width:1px;height:22px;background:#efefef"></div>
<div class="a" style="left:1120px;top:208px;width:1px;height:22px;background:#efefef"></div>
<div class="a" style="left:1213px;top:208px;width:1px;height:22px;background:#efefef"></div>
<div class="t" style="left:319px;top:212px;width:51px;text-align:right">2</div>
<div class="t" style="left:376.00px;top:212px;font-size:12px;color:#000;">zj</div>
<div class="t" style="left:476.30px;top:212px;font-size:12px;color:#000;letter-spacing:-0.073px;">E10ADC3949BA59ABBE56E057F20F883E</div>
<div class="t" style="left:874.00px;top:212px;font-size:12px;color:#000;">张杰</div>
<div class="t" style="left:974.50px;top:212px;font-size:12px;color:#000;letter-spacing:0.176px;">138138138</div>
<div class="t" style="left:1043.00px;top:212px;font-size:12px;color:#000;">2</div>
<div class="t" style="left:1123.00px;top:212px;font-size:12px;color:#000;">低</div>
<div class="a" style="left:319px;top:230px;width:894px;height:22px;background:#fff;border-bottom:1px solid #efefef"></div>
<div class="a" style="left:308px;top:230px;width:11px;height:22px;background:linear-gradient(90deg,#f2f2f2,#fcfcfc);border-bottom:1px solid #e6e6e6"></div>
<div class="a" style="left:319px;top:230px;width:1px;height:22px;background:#efefef"></div>
<div class="a" style="left:373px;top:230px;width:1px;height:22px;background:#efefef"></div>
<div class="a" style="left:473px;top:230px;width:1px;height:22px;background:#efefef"></div>
<div class="a" style="left:871px;top:230px;width:1px;height:22px;background:#efefef"></div>
<div class="a" style="left:946px;top:230px;width:1px;height:22px;background:#efefef"></div>
<div class="a" style="left:1040px;top:230px;width:1px;height:22px;background:#efefef"></div>
<div class="a" style="left:1120px;top:230px;width:1px;height:22px;background:#efefef"></div>
<div class="a" style="left:1213px;top:230px;width:1px;height:22px;background:#efefef"></div>
<div class="t" style="left:319px;top:234px;width:51px;text-align:right">3</div>
<div class="t" style="left:376.00px;top:234px;font-size:12px;color:#000;">zh</div>
<div class="t" style="left:476.30px;top:234px;font-size:12px;color:#000;letter-spacing:-0.073px;">E10ADC3949BA59ABBE56E057F20F883E</div>
<div class="t" style="left:874.00px;top:234px;font-size:12px;color:#000;">张欢</div>
<div class="t" style="left:974.50px;top:234px;font-size:12px;color:#000;letter-spacing:0.176px;">138138138</div>
<div class="t" style="left:1043.00px;top:234px;font-size:12px;color:#000;">1</div>
<div class="t" style="left:1123.00px;top:234px;font-size:12px;color:#000;">高</div>
<div class="a" style="left:319px;top:252px;width:894px;height:22px;background:#fff;border-bottom:1px solid #efefef"></div>
<div class="a" style="left:308px;top:252px;width:11px;height:22px;background:linear-gradient(90deg,#f2f2f2,#fcfcfc);border-bottom:1px solid #e6e6e6"></div>
<div class="a" style="left:319px;top:252px;width:1px;height:22px;background:#efefef"></div>
<div class="a" style="left:373px;top:252px;width:1px;height:22px;background:#efefef"></div>
<div class="a" style="left:473px;top:252px;width:1px;height:22px;background:#efefef"></div>
<div class="a" style="left:871px;top:252px;width:1px;height:22px;background:#efefef"></div>
<div class="a" style="left:946px;top:252px;width:1px;height:22px;background:#efefef"></div>
<div class="a" style="left:1040px;top:252px;width:1px;height:22px;background:#efefef"></div>
<div class="a" style="left:1120px;top:252px;width:1px;height:22px;background:#efefef"></div>
<div class="a" style="left:1213px;top:252px;width:1px;height:22px;background:#efefef"></div>
<div class="t" style="left:319px;top:256px;width:51px;text-align:right">4</div>
<div class="t" style="left:376.00px;top:256px;font-size:12px;color:#000;">zk</div>
<div class="t" style="left:476.30px;top:256px;font-size:12px;color:#000;letter-spacing:-0.073px;">E10ADC3949BA59ABBE56E057F20F883E</div>
<div class="t" style="left:874.00px;top:256px;font-size:12px;color:#000;">赵凯</div>
<div class="t" style="left:974.50px;top:256px;font-size:12px;color:#000;letter-spacing:0.176px;">138138138</div>
<div class="t" style="left:1043.00px;top:256px;font-size:12px;color:#000;">2</div>
<div class="t" style="left:1123.00px;top:256px;font-size:12px;color:#000;">低</div>
<div class="a" style="left:319px;top:274px;width:894px;height:22px;background:#fff;border-bottom:1px solid #efefef"></div>
<div class="a" style="left:308px;top:274px;width:11px;height:22px;background:linear-gradient(90deg,#f2f2f2,#fcfcfc);border-bottom:1px solid #e6e6e6"></div>
<div class="a" style="left:319px;top:274px;width:1px;height:22px;background:#efefef"></div>
<div class="a" style="left:373px;top:274px;width:1px;height:22px;background:#efefef"></div>
<div class="a" style="left:473px;top:274px;width:1px;height:22px;background:#efefef"></div>
<div class="a" style="left:871px;top:274px;width:1px;height:22px;background:#efefef"></div>
<div class="a" style="left:946px;top:274px;width:1px;height:22px;background:#efefef"></div>
<div class="a" style="left:1040px;top:274px;width:1px;height:22px;background:#efefef"></div>
<div class="a" style="left:1120px;top:274px;width:1px;height:22px;background:#efefef"></div>
<div class="a" style="left:1213px;top:274px;width:1px;height:22px;background:#efefef"></div>
<div class="t" style="left:319px;top:278px;width:51px;text-align:right">5</div>
<div class="t" style="left:376.00px;top:278px;font-size:12px;color:#000;">ywj</div>
<div class="t" style="left:476.30px;top:278px;font-size:12px;color:#000;letter-spacing:-0.073px;">E10ADC3949BA59ABBE56E057F20F883E</div>
<div class="t" style="left:874.00px;top:278px;font-size:12px;color:#000;">杨雯雯</div>
<div class="t" style="left:974.50px;top:278px;font-size:12px;color:#000;letter-spacing:0.176px;">138138138</div>
<div class="t" style="left:1043.00px;top:278px;font-size:12px;color:#000;">1</div>
<div class="t" style="left:1123.00px;top:278px;font-size:12px;color:#000;">高</div>
<div class="a" style="left:319px;top:296px;width:894px;height:22px;background:#f7fafd;border-bottom:1px solid #efefef"></div>
<div class="a" style="left:308px;top:296px;width:11px;height:22px;background:linear-gradient(90deg,#f2f2f2,#fcfcfc);border-bottom:1px solid #e6e6e6"></div>
<div class="a" style="left:319px;top:296px;width:1px;height:22px;background:#efefef"></div>
<div class="a" style="left:373px;top:296px;width:1px;height:22px;background:#efefef"></div>
<div class="a" style="left:473px;top:296px;width:1px;height:22px;background:#efefef"></div>
<div class="a" style="left:871px;top:296px;width:1px;height:22px;background:#efefef"></div>
<div class="a" style="left:946px;top:296px;width:1px;height:22px;background:#efefef"></div>
<div class="a" style="left:1040px;top:296px;width:1px;height:22px;background:#efefef"></div>
<div class="a" style="left:1120px;top:296px;width:1px;height:22px;background:#efefef"></div>
<div class="a" style="left:1213px;top:296px;width:1px;height:22px;background:#efefef"></div>
<div class="t" style="left:319px;top:300px;width:51px;text-align:right">6</div>
<div class="t" style="left:376.00px;top:300px;font-size:12px;color:#000;">wh</div>
<div class="t" style="left:476.30px;top:300px;font-size:12px;color:#000;letter-spacing:-0.073px;">E10ADC3949BA59ABBE56E057F20F883E</div>
<div class="t" style="left:874.00px;top:300px;font-size:12px;color:#000;">王皓</div>
<div class="t" style="left:974.50px;top:300px;font-size:12px;color:#000;letter-spacing:0.176px;">138138138</div>
<div class="t" style="left:1043.00px;top:300px;font-size:12px;color:#000;">1</div>
<div class="t" style="left:1123.00px;top:300px;font-size:12px;color:#000;">高</div>
<div class="a" style="left:319px;top:318px;width:894px;height:22px;background:#fff;border-bottom:1px solid #efefef"></div>
<div class="a" style="left:308px;top:318px;width:11px;height:22px;background:linear-gradient(90deg,#f2f2f2,#fcfcfc);border-bottom:1px solid #e6e6e6"></div>
<div class="a" style="left:319px;top:318px;width:1px;height:22px;background:#efefef"></div>
<div class="a" style="left:373px;top:318px;width:1px;height:22px;background:#efefef"></div>
<div class="a" style="left:473px;top:318px;width:1px;height:22px;background:#efefef"></div>
<div class="a" style="left:871px;top:318px;width:1px;height:22px;background:#efefef"></div>
<div class="a" style="left:946px;top:318px;width:1px;height:22px;background:#efefef"></div>
<div class="a" style="left:1040px;top:318px;width:1px;height:22px;background:#efefef"></div>
<div class="a" style="left:1120px;top:318px;width:1px;height:22px;background:#efefef"></div>
<div class="a" style="left:1213px;top:318px;width:1px;height:22px;background:#efefef"></div>
<div class="t" style="left:319px;top:322px;width:51px;text-align:right">7</div>
<div class="t" style="left:376.00px;top:322px;font-size:12px;color:#000;">zw</div>
<div class="t" style="left:476.30px;top:322px;font-size:12px;color:#000;letter-spacing:-0.073px;">E10ADC3949BA59ABBE56E057F20F883E</div>
<div class="t" style="left:874.00px;top:322px;font-size:12px;color:#000;">张伟</div>
<div class="t" style="left:974.50px;top:322px;font-size:12px;color:#000;letter-spacing:0.176px;">138138138</div>
<div class="t" style="left:1043.00px;top:322px;font-size:12px;color:#000;">2</div>
<div class="t" style="left:1123.00px;top:322px;font-size:12px;color:#000;">低</div>
<div class="a" style="left:319px;top:340px;width:894px;height:22px;background:#fff;border-bottom:1px solid #efefef"></div>
<div class="a" style="left:308px;top:340px;width:11px;height:22px;background:linear-gradient(90deg,#f2f2f2,#fcfcfc);border-bottom:1px solid #e6e6e6"></div>
<div class="a" style="left:319px;top:340px;width:1px;height:22px;background:#efefef"></div>
<div class="a" style="left:373px;top:340px;width:1px;height:22px;background:#efefef"></div>
<div class="a" style="left:473px;top:340px;width:1px;height:22px;background:#efefef"></div>
<div class="a" style="left:871px;top:340px;width:1px;height:22px;background:#efefef"></div>
<div class="a" style="left:946px;top:340px;width:1px;height:22px;background:#efefef"></div>
<div class="a" style="left:1040px;top:340px;width:1px;height:22px;background:#efefef"></div>
<div class="a" style="left:1120px;top:340px;width:1px;height:22px;background:#efefef"></div>
<div class="a" style="left:1213px;top:340px;width:1px;height:22px;background:#efefef"></div>
<div class="t" style="left:319px;top:344px;width:51px;text-align:right">8</div>
<div class="t" style="left:376.00px;top:344px;font-size:12px;color:#000;">zj</div>
<div class="t" style="left:476.30px;top:344px;font-size:12px;color:#000;letter-spacing:-0.073px;">E10ADC3949BA59ABBE56E057F20F883E</div>
<div class="t" style="left:874.00px;top:344px;font-size:12px;color:#000;">赵佳</div>
<div class="t" style="left:974.50px;top:344px;font-size:12px;color:#000;letter-spacing:0.176px;">138138138</div>
<div class="t" style="left:1043.00px;top:344px;font-size:12px;color:#000;">2</div>
<div class="t" style="left:1123.00px;top:344px;font-size:12px;color:#000;">低</div>
<div class="a" style="left:319px;top:362px;width:894px;height:22px;background:#fff;border-bottom:1px solid #efefef"></div>
<div class="a" style="left:308px;top:362px;width:11px;height:22px;background:linear-gradient(90deg,#f2f2f2,#fcfcfc);border-bottom:1px solid #e6e6e6"></div>
<div class="a" style="left:319px;top:362px;width:1px;height:22px;background:#efefef"></div>
<div class="a" style="left:373px;top:362px;width:1px;height:22px;background:#efefef"></div>
<div class="a" style="left:473px;top:362px;width:1px;height:22px;background:#efefef"></div>
<div class="a" style="left:871px;top:362px;width:1px;height:22px;background:#efefef"></div>
<div class="a" style="left:946px;top:362px;width:1px;height:22px;background:#efefef"></div>
<div class="a" style="left:1040px;top:362px;width:1px;height:22px;background:#efefef"></div>
<div class="a" style="left:1120px;top:362px;width:1px;height:22px;background:#efefef"></div>
<div class="a" style="left:1213px;top:362px;width:1px;height:22px;background:#efefef"></div>
<div class="t" style="left:319px;top:366px;width:51px;text-align:right">9</div>
<div class="t" style="left:376.00px;top:366px;font-size:12px;color:#000;">wf</div>
<div class="t" style="left:476.30px;top:366px;font-size:12px;color:#000;letter-spacing:-0.073px;">E10ADC3949BA59ABBE56E057F20F883E</div>
<div class="t" style="left:874.00px;top:366px;font-size:12px;color:#000;">王凡</div>
<div class="t" style="left:974.50px;top:366px;font-size:12px;color:#000;letter-spacing:0.176px;">138138138</div>
<div class="t" style="left:1043.00px;top:366px;font-size:12px;color:#000;">1</div>
<div class="t" style="left:1123.00px;top:366px;font-size:12px;color:#000;">高</div>
<div class="a" style="left:319px;top:384px;width:894px;height:22px;background:#fff;border-bottom:1px solid #efefef"></div>
<div class="a" style="left:308px;top:384px;width:11px;height:22px;background:linear-gradient(90deg,#f2f2f2,#fcfcfc);border-bottom:1px solid #e6e6e6"></div>
<div class="a" style="left:319px;top:384px;width:1px;height:22px;background:#efefef"></div>
<div class="a" style="left:373px;top:384px;width:1px;height:22px;background:#efefef"></div>
<div class="a" style="left:473px;top:384px;width:1px;height:22px;background:#efefef"></div>
<div class="a" style="left:871px;top:384px;width:1px;height:22px;background:#efefef"></div>
<div class="a" style="left:946px;top:384px;width:1px;height:22px;background:#efefef"></div>
<div class="a" style="left:1040px;top:384px;width:1px;height:22px;background:#efefef"></div>
<div class="a" style="left:1120px;top:384px;width:1px;height:22px;background:#efefef"></div>
<div class="a" style="left:1213px;top:384px;width:1px;height:22px;background:#efefef"></div>
<div class="t" style="left:319px;top:388px;width:51px;text-align:right">10</div>
<div class="t" style="left:376.00px;top:388px;font-size:12px;color:#000;">zn</div>
<div class="t" style="left:476.30px;top:388px;font-size:12px;color:#000;letter-spacing:-0.073px;">E10ADC3949BA59ABBE56E057F20F883E</div>
<div class="t" style="left:874.00px;top:388px;font-size:12px;color:#000;">张娜</div>
<div class="t" style="left:974.50px;top:388px;font-size:12px;color:#000;letter-spacing:0.176px;">138138138</div>
<div class="t" style="left:1043.00px;top:388px;font-size:12px;color:#000;">1</div>
<div class="t" style="left:1123.00px;top:388px;font-size:12px;color:#000;">高</div>
<div class="a" style="left:319px;top:406px;width:894px;height:22px;background:#fff;border-bottom:1px solid #efefef"></div>
<div class="a" style="left:308px;top:406px;width:11px;height:22px;background:linear-gradient(90deg,#f2f2f2,#fcfcfc);border-bottom:1px solid #e6e6e6"></div>
<div class="a" style="left:319px;top:406px;width:1px;height:22px;background:#efefef"></div>
<div class="a" style="left:373px;top:406px;width:1px;height:22px;background:#efefef"></div>
<div class="a" style="left:473px;top:406px;width:1px;height:22px;background:#efefef"></div>
<div class="a" style="left:871px;top:406px;width:1px;height:22px;background:#efefef"></div>
<div class="a" style="left:946px;top:406px;width:1px;height:22px;background:#efefef"></div>
<div class="a" style="left:1040px;top:406px;width:1px;height:22px;background:#efefef"></div>
<div class="a" style="left:1120px;top:406px;width:1px;height:22px;background:#efefef"></div>
<div class="a" style="left:1213px;top:406px;width:1px;height:22px;background:#efefef"></div>
<div class="t" style="left:319px;top:410px;width:51px;text-align:right">11</div>
<div class="t" style="left:376.00px;top:410px;font-size:12px;color:#000;">jzh</div>
<div class="t" style="left:476.30px;top:410px;font-size:12px;color:#000;letter-spacing:-0.073px;">E10ADC3949BA59ABBE56E057F20F883E</div>
<div class="t" style="left:874.00px;top:410px;font-size:12px;color:#000;">蒋子华</div>
<div class="t" style="left:974.50px;top:410px;font-size:12px;color:#000;letter-spacing:0.176px;">138138138</div>
<div class="t" style="left:1043.00px;top:410px;font-size:12px;color:#000;">2</div>
<div class="t" style="left:1123.00px;top:410px;font-size:12px;color:#000;">低</div>
<div class="a" style="left:319px;top:428px;width:894px;height:22px;background:#f7fafd;border-bottom:1px solid #efefef"></div>
<div class="a" style="left:308px;top:428px;width:11px;height:22px;background:linear-gradient(90deg,#f2f2f2,#fcfcfc);border-bottom:1px solid #e6e6e6"></div>
<div class="a" style="left:319px;top:428px;width:1px;height:22px;background:#efefef"></div>
<div class="a" style="left:373px;top:428px;width:1px;height:22px;background:#efefef"></div>
<div class="a" style="left:473px;top:428px;width:1px;height:22px;background:#efefef"></div>
<div class="a" style="left:871px;top:428px;width:1px;height:22px;background:#efefef"></div>
<div class="a" style="left:946px;top:428px;width:1px;height:22px;background:#efefef"></div>
<div class="a" style="left:1040px;top:428px;width:1px;height:22px;background:#efefef"></div>
<div class="a" style="left:1120px;top:428px;width:1px;height:22px;background:#efefef"></div>
<div class="a" style="left:1213px;top:428px;width:1px;height:22px;background:#efefef"></div>
<div class="t" style="left:319px;top:432px;width:51px;text-align:right">12</div>
<div class="t" style="left:376.00px;top:432px;font-size:12px;color:#000;">xl</div>
<div class="t" style="left:476.30px;top:432px;font-size:12px;color:#000;letter-spacing:-0.073px;">E10ADC3949BA59ABBE56E057F20F883E</div>
<div class="t" style="left:874.00px;top:432px;font-size:12px;color:#000;">薛磊</div>
<div class="t" style="left:974.50px;top:432px;font-size:12px;color:#000;letter-spacing:0.176px;">138138138</div>
<div class="t" style="left:1043.00px;top:432px;font-size:12px;color:#000;">2</div>
<div class="t" style="left:1123.00px;top:432px;font-size:12px;color:#000;">低</div>
<svg style="left:310px;top:193px" width="8" height="10"><path d="M0.5,0 L7,5 L0.5,10Z" fill="#000"/></svg>
<div class="a" style="left:1347px;top:164px;width:5px;height:524px;background:#f0f0f0"></div>
<div class="a" style="left:1347px;top:182px;width:6px;height:254px;border:1px solid #a8a8a8;border-right:none;background:#fff"></div>
<div class="a" style="left:1350px;top:305px;width:2px;height:1px;background:#333"></div><div class="a" style="left:1350px;top:308px;width:2px;height:1px;background:#333"></div><div class="a" style="left:1350px;top:311px;width:2px;height:1px;background:#333"></div>
<svg style="left:315px;top:694px" width="140" height="12"><path d="M5,0.5v10M0,5.5h10" stroke="#111" stroke-width="2.5"/><path d="M24,5.5h10" stroke="#111" stroke-width="2.5"/><path d="M48,6 l2.5,3 l5,-7" fill="none" stroke="#c8c8c8" stroke-width="1.8"/><path d="M73,1.5l7,7M80,1.5l-7,7" stroke="#c8c8c8" stroke-width="1.8"/><path d="M104.5,2.5 A4,4 0 1 0 105.5,8.5" fill="none" stroke="#111" stroke-width="2"/><path d="M101,0 L106,3.5 L101.5,6Z" fill="#111"/><circle cx="125" cy="5.5" r="4.2" fill="none" stroke="#111" stroke-width="2"/><path d="M122,2.5l6,6" stroke="#111" stroke-width="2"/></svg>
<svg style="left:1168px;top:693px" width="135" height="13"><rect x="1" y="1" width="2" height="10" fill="#000"/><path d="M3.2,6 L6.9,1 V11Z" fill="#000"/><rect x="6.5" y="3.5" width="5.2" height="5" fill="#000"/><path d="M25.2,6 L29.4,1 V11Z" fill="#000"/><rect x="29" y="3.5" width="5.6" height="5" fill="#000"/><rect x="73.2" y="3.5" width="5.6" height="4.5" fill="#000"/><path d="M83,5.8 L78.4,1 V10.8Z" fill="#000"/><rect x="97.3" y="3.5" width="5.3" height="4.5" fill="#000"/><path d="M106.5,5.8 L102.2,1 V10.8Z" fill="#000"/><rect x="106.3" y="1" width="1.8" height="10" fill="#000"/></svg>
<svg style="left:1288px;top:693px" width="13" height="13"><g transform="translate(6.5,6.5)"><circle r="4.2" fill="#000"/><circle r="1.9" fill="#fff"/><rect x="-1.1" y="-5.8" width="2.2" height="3" fill="#000" transform="rotate(0)"/><rect x="-1.1" y="-5.8" width="2.2" height="3" fill="#000" transform="rotate(45)"/><rect x="-1.1" y="-5.8" width="2.2" height="3" fill="#000" transform="rotate(90)"/><rect x="-1.1" y="-5.8" width="2.2" height="3" fill="#000" transform="rotate(135)"/><rect x="-1.1" y="-5.8" width="2.2" height="3" fill="#000" transform="rotate(180)"/><rect x="-1.1" y="-5.8" width="2.2" height="3" fill="#000" transform="rotate(225)"/><rect x="-1.1" y="-5.8" width="2.2" height="3" fill="#000" transform="rotate(270)"/><rect x="-1.1" y="-5.8" width="2.2" height="3" fill="#000" transform="rotate(315)"/></g></svg>
<div class="a" style="left:1210px;top:692px;width:24px;height:17px;background:#fff"></div>
<div class="t" style="left:1210px;top:694px;width:24px;text-align:center">1</div>
<div class="a" style="left:1312px;top:690px;width:1px;height:18px;background:#d5d5d5"></div>
<div class="a" style="left:1317px;top:689px;width:23px;height:20px;border:1px solid #6e6e6e;border-radius:3px;background:linear-gradient(#dcdcdc,#e9e9e9)"></div>
<svg style="left:1320px;top:692px" width="17" height="14"><rect x="0.5" y="0.5" width="16" height="13" fill="#fff" stroke="#555"/><path d="M0.5,4.5h16M0.5,8.5h16M5.5,0.5v13M11.5,0.5v13" stroke="#666"/></svg>
<svg style="left:1343px;top:692px" width="12" height="14"><rect x="0.5" y="0.5" width="14" height="13" fill="#fff" stroke="#555"/><rect x="0.5" y="0.5" width="14" height="2.5" fill="#666"/><path d="M3,6h9M3,9h9M3,11.5h9" stroke="#888"/></svg>
<div class="a" style="left:0;top:710px;width:1352px;height:1px;background:#9a9a9a"></div>
<div class="a" style="left:0;top:711px;width:1352px;height:21px;background:#f0f0f0"></div>
<div class="a" style="left:307px;top:712px;width:1px;height:19px;background:#d8d8d8"></div>
<div class="a" style="left:1043px;top:712px;width:1px;height:19px;background:#d8d8d8"></div>
<div class="t" style="left:313.40px;top:715px;font-size:12px;color:#000;letter-spacing:0.161px;">SELECT * FROM `d_admin` LIMIT 0, 1000</div>
<div class="t" style="left:1117.70px;top:715px;font-size:12px;color:#000;letter-spacing:0.265px;">第 1 条记录 (共 12 条) 于第 1 页</div>
<div class="a" style="left:0;top:732px;width:1352px;height:1px;background:#000"></div>
<div class="a" style="left:0;top:733px;width:1352px;height:19px;background:linear-gradient(#b4c0cc,#8898ae 2px,#8292aa)"></div>
<div class="a" style="left:102px;top:733px;width:147px;height:22px;border:1px solid #2b3847;border-radius:3px;background:linear-gradient(#f4efdc,#e6dcb8);box-shadow:inset 0 1px 0 rgba(255,255,255,.5)"></div>
<svg style="left:112px;top:739px" width="16" height="16"><circle cx="8" cy="8" r="7.5" fill="#db4437"/><path d="M8,8 L1.5,11.75 A7.5,7.5 0 0 0 14.5,11.75Z" fill="#0f9d58"/><path d="M8,8 L14.5,11.75 A7.5,7.5 0 0 0 8,0.5Z" fill="#f4b400"/><circle cx="8" cy="8" r="3.6" fill="#fff"/><circle cx="8" cy="8" r="2.7" fill="#4285f4"/></svg>
<div class="t" style="left:132px;top:740px;font-size:13px;color:#fff;text-shadow:0 0 3px rgba(0,0,0,.6)">后台登录 - Googl...</div>
<div class="a" style="left:253px;top:733px;width:147px;height:22px;border:1px solid #2b3847;border-radius:3px;background:linear-gradient(#c3ccd6,#aab6c3 40%,#8c9bb0);box-shadow:inset 0 1px 0 rgba(255,255,255,.5)"></div>
<svg style="left:262px;top:738px" width="16" height="16"><path d="M1,2 h5 l1,2 h8 v12 h-14z" fill="#e6c44a"/><rect x="3" y="3" width="10" height="13" fill="#f5df7a"/></svg>
<div class="t" style="left:283px;top:740px;font-size:13px;color:#fff;text-shadow:0 0 3px rgba(0,0,0,.6)">01.-oCam 强烈推...</div>
<div class="a" style="left:404px;top:733px;width:147px;height:22px;border:1px solid #2b3847;border-radius:3px;background:linear-gradient(#c3ccd6,#aab6c3 40%,#8c9bb0);box-shadow:inset 0 1px 0 rgba(255,255,255,.5)"></div>
<svg style="left:413px;top:738px" width="16" height="16"><rect width="16" height="16" fill="#000"/><rect x="1" y="1" width="14" height="14" fill="#1d1d3a"/><text x="2" y="9" font-size="8" font-weight="bold" fill="#fff" font-family="Liberation Sans">IJ</text><rect x="2" y="12" width="6" height="1.5" fill="#fff"/></svg>
<div class="t" style="left:434px;top:740px;font-size:13px;color:#fff;text-shadow:0 0 3px rgba(0,0,0,.6)">DormitoryManag...</div>
<div class="a" style="left:555px;top:733px;width:147px;height:22px;border:1px solid #2b3847;border-radius:3px;background:linear-gradient(#c3ccd6,#aab6c3 40%,#8c9bb0);box-shadow:inset 0 1px 0 rgba(255,255,255,.5)"></div>
<svg style="left:563px;top:738px" width="16" height="16"><circle cx="8" cy="8" r="7" fill="#2c2255"/><circle cx="8" cy="8" r="7" fill="none" stroke="#e8e8e8" stroke-width="1.5" stroke-dasharray="2 1.5"/><circle cx="8" cy="9" r="4" fill="#3d3174"/></svg>
<div class="t" style="left:585px;top:740px;font-size:13px;color:#fff;text-shadow:0 0 3px rgba(0,0,0,.6)">Java EE - dormit...</div>
<div class="a" style="left:706px;top:733px;width:146px;height:22px;border:1px solid #2b3847;border-radius:3px;background:linear-gradient(#c3ccd6,#aab6c3 40%,#8c9bb0);box-shadow:inset 0 1px 0 rgba(255,255,255,.5)"></div>
<svg style="left:714px;top:738px" width="16" height="16"><circle cx="8" cy="10" r="6" fill="#f2c83a"/><circle cx="3" cy="4" r="2.5" fill="#f2c83a"/><circle cx="13" cy="4" r="2.5" fill="#f2c83a"/></svg>
<div class="t" style="left:736px;top:740px;font-size:13px;color:#fff;text-shadow:0 0 3px rgba(0,0,0,.6)">d_admin @dorm...</div>
<div class="a" style="left:856px;top:733px;width:146px;height:22px;border:1px solid #2b3847;border-radius:3px;background:linear-gradient(#c3ccd6,#aab6c3 40%,#8c9bb0);box-shadow:inset 0 1px 0 rgba(255,255,255,.5)"></div>
<svg style="left:865px;top:738px" width="16" height="16"><rect x="0" y="0" width="16" height="16" fill="#fff"/><circle cx="6" cy="8" r="3" fill="#e8702a"/><rect x="11" y="2" width="3" height="14" fill="#e8702a"/></svg>
<div class="t" style="left:886px;top:740px;font-size:13px;color:#fff;text-shadow:0 0 3px rgba(0,0,0,.6)">ocam</div>
<svg style="left:4px;top:725px" width="42" height="40"><defs><linearGradient id="og" x1="0" y1="0" x2="0" y2="1"><stop offset="0" stop-color="#d0dae4"/><stop offset="0.45" stop-color="#7f9ab4"/><stop offset="0.52" stop-color="#0f4a8c"/><stop offset="1" stop-color="#1a6fc0"/></linearGradient></defs><circle cx="20" cy="20" r="17.8" fill="url(#og)" stroke="#1c2a3a" stroke-width="1.2"/><path d="M11,11 C14,9 17,9 20.5,11 L19.5,20 C16,18 13,18 10,20Z" fill="#ee6a28"/><path d="M22,11.5 C25,13.5 28,13.5 32,11.5 L31,21 C27.5,23 24.5,23 21,21Z" fill="#8cc43c"/><path d="M9.8,21.5 C13,19.5 16,19.5 19.3,21.5 L18.5,31 C15,29 12,29 9,31Z" fill="#2a9ee8"/><path d="M20.8,22.5 C24,24.5 27.5,24.5 31,22.5 L30,32 C26.5,34 23.5,34 20,32Z" fill="#f6c21c"/></svg>
<svg style="left:68px;top:737px" width="20" height="18"><path d="M15,9 H5.5 C5.5,5.5 7.5,4.5 9.5,4.5 C12,4.5 14.5,6 15,9Z M5.5,11.5 C6,14 8,15 10,15 C12,15 13.5,14 14.5,12.5" fill="none" stroke="#3aa0e8" stroke-width="2.6"/><path d="M2,16 C3,8 10,2 17,2.5 C18,3 17,4 15.5,5" fill="none" stroke="#f0c838" stroke-width="1.6"/></svg>
<div class="a" style="left:1003px;top:733px;width:349px;height:19px;background:linear-gradient(#a9b6c4,#8192a9 2px,#7e8fa7);border-left:1px solid #2e3a48"></div>
<svg style="left:1016px;top:740px" width="16" height="12"><rect x="0.5" y="1.5" width="14" height="10" rx="1" fill="#ddd" stroke="#888"/><path d="M2.5,4.5h10M2.5,7h10" stroke="#888" stroke-dasharray="1.2 0.8"/></svg>
<svg style="left:1037px;top:737px" width="16" height="16"><circle cx="8" cy="8" r="7.5" fill="#1f3fa8" stroke="#fff" stroke-width="1"/><text x="4.5" y="13" font-size="12" font-weight="bold" fill="#fff" font-family="Liberation Sans">?</text></svg>
<svg style="left:1062px;top:736px" width="12" height="16"><rect x="3" y="0.5" width="7" height="4" fill="none" stroke="#fff"/><rect x="0.5" y="2.5" width="7" height="4" fill="none" stroke="#fff"/><path d="M3,12 h5 l-2.5,3z" fill="#fff"/></svg>
<svg style="left:1081px;top:742px" width="10" height="6"><path d="M0.5,5 L5,1 L9.5,5Z" fill="#fff"/></svg>
<svg style="left:1100px;top:737px" width="20" height="16"><ellipse cx="8" cy="8" rx="7.5" ry="6.5" fill="#4fb52e"/><ellipse cx="13" cy="11" rx="6" ry="5" fill="#e8e8e8"/></svg>
<svg style="left:1128px;top:736px" width="13" height="17"><rect x="0.5" y="0.5" width="12" height="17" rx="6" fill="#0b3a8a"/><path d="M3.5,5.5 L9,10.5 L6.3,13 V2.5 L9,5 L3.5,10" fill="none" stroke="#fff" stroke-width="1.1"/></svg>
<svg style="left:1150px;top:737px" width="17" height="16"><path d="M8.5,0.5 L16,3 C16,10 12,14 8.5,15.5 C5,14 1,10 1,3Z" fill="#1b7fd6" stroke="#fff"/><path d="M4,7 L8.5,10.5 L13,7" fill="none" stroke="#fff" stroke-width="1.6"/></svg>
<svg style="left:1174px;top:737px" width="16" height="16"><path d="M8,0.5 L15.5,8 L8,15.5 L0.5,8Z" fill="#2a95e8"/><path d="M9,3 L5,9 H8 L7,13 L11,7 H8Z" fill="#fff"/></svg>
<svg style="left:1198px;top:737px" width="16" height="16"><circle cx="8" cy="8" r="7.5" fill="#2b5fb8"/><path d="M3,4 C8,6 11,9 12,15" fill="none" stroke="#fff" stroke-width="2"/></svg>
<svg style="left:1223px;top:736px" width="14" height="17"><rect x="1.5" y="0.5" width="11" height="16" fill="none" stroke="#fff" stroke-width="1.4"/><path d="M4,4v4M10,4v4M3,8h8v3h-8z M7,11v5" stroke="#fff" fill="#fff" stroke-width="1.4"/></svg>
<svg style="left:1246px;top:738px" width="17" height="14"><g fill="#fff"><rect x="0" y="11" width="2" height="3"/><rect x="3.5" y="8.5" width="2" height="5.5"/><rect x="7" y="6" width="2" height="8"/><rect x="10.5" y="3" width="2" height="11"/><rect x="14" y="0" width="2" height="14"/></g></svg>
<svg style="left:1270px;top:737px" width="16" height="16"><path d="M1,5.5h3l4,-4v13l-4,-4h-3z" fill="#fff" stroke="#555" stroke-width="0.8"/><path d="M10.5,5 a4,4 0 0 1 0,6M12.5,3 a7,7 0 0 1 0,10" fill="none" stroke="#fff" stroke-width="1.2"/></svg>
<div class="t" style="left:1306.00px;top:740px;font-size:13px;color:#fff;">10:04</div>
<svg style="left:174px;top:744px" width="10" height="10"><path d="M0.5,0.5 L0.5,12 L3.5,9 L6,14 L8,13 L5.5,8 L9.5,8Z" fill="#000" stroke="#fff" stroke-width="0.8"/></svg>
</body></html>
